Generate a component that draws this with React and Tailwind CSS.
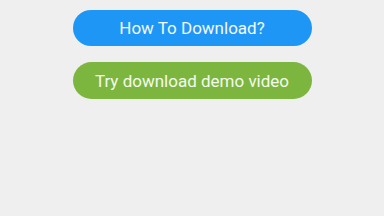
import React from 'react';

const App = () => {
  return (
    <div className="w-[384px] h-[216px] bg-[#efefef] flex flex-col items-center pt-[10px] gap-[16px]" style={{ fontFamily: 'Roboto, sans-serif' }}>
      <button className="w-[239px] h-[36px] rounded-full bg-[#1e96f6] text-[#f4f8ff] text-[17px] flex items-center justify-center pt-[2px]">
        How To Download?
      </button>
      <button className="w-[239px] h-[37px] rounded-full bg-[#7cb63e] text-[#f4faee] text-[17px] flex items-center justify-center pt-[3px]">
        Try download demo video
      </button>
    </div>
  );
};

export default App;
